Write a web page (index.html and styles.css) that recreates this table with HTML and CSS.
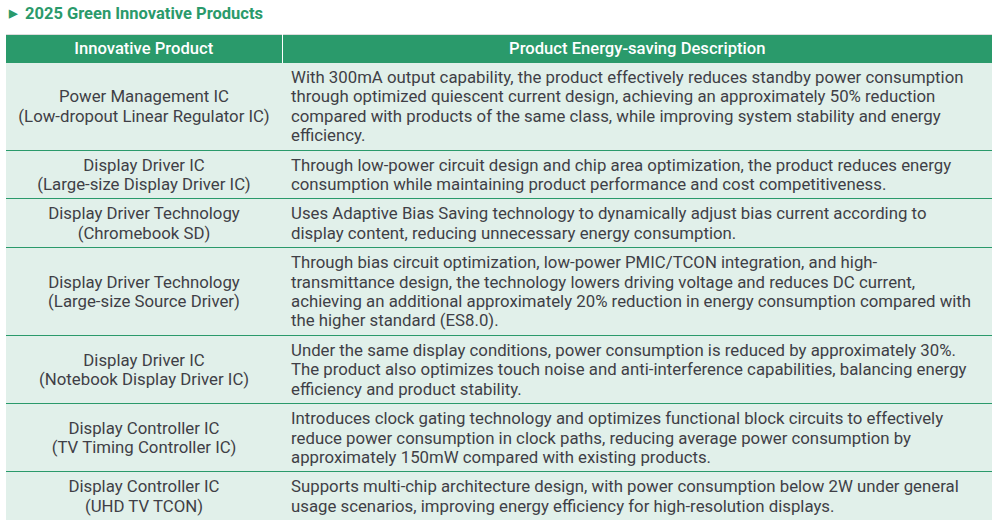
FILE: index.html
```html
<!DOCTYPE html>
<html lang="en">
<head>
<meta charset="utf-8">
<title>2025 Green Innovative Products</title>
<link rel="stylesheet" href="styles.css">
</head>
<body>
<div class="page">
  <h2 class="title"><span class="tri">&#9654;</span>2025 Green Innovative Products</h2>
  <table class="products">
    <thead>
      <tr><th class="c1">Innovative Product</th><th class="c2">Product Energy-saving Description</th></tr>
    </thead>
    <tbody>
      <tr><td class="c1">Power Management IC<br>(Low-dropout Linear Regulator IC)</td><td class="c2">With 300mA output capability, the product effectively reduces standby power consumption through optimized quiescent current design, achieving an approximately 50% reduction compared with products of the same class, while improving system stability and energy efficiency.</td></tr>
      <tr><td class="c1">Display Driver IC<br>(Large-size Display Driver IC)</td><td class="c2">Through low-power circuit design and chip area optimization, the product reduces energy consumption while maintaining product performance and cost competitiveness.</td></tr>
      <tr><td class="c1">Display Driver Technology<br>(Chromebook SD)</td><td class="c2">Uses Adaptive Bias Saving technology to dynamically adjust bias current according to display content, reducing unnecessary energy consumption.</td></tr>
      <tr><td class="c1">Display Driver Technology<br>(Large-size Source Driver)</td><td class="c2">Through bias circuit optimization, low-power PMIC/TCON integration, and high-transmittance design, the technology lowers driving voltage and reduces DC current, achieving an additional approximately 20% reduction in energy consumption compared with the higher standard (ES8.0).</td></tr>
      <tr><td class="c1">Display Driver IC<br>(Notebook Display Driver IC)</td><td class="c2">Under the same display conditions, power consumption is reduced by approximately 30%. The product also optimizes touch noise and anti-interference capabilities, balancing energy efficiency and product stability.</td></tr>
      <tr><td class="c1">Display Controller IC<br>(TV Timing Controller IC)</td><td class="c2">Introduces clock gating technology and optimizes functional block circuits to effectively reduce power consumption in clock paths, reducing average power consumption by approximately 150mW compared with existing products.</td></tr>
      <tr><td class="c1">Display Controller IC<br>(UHD TV TCON)</td><td class="c2">Supports multi-chip architecture design, with power consumption below 2W under general usage scenarios, improving energy efficiency for high-resolution displays.</td></tr>
    </tbody>
  </table>
</div>
</body>
</html>
```
FILE: styles.css
```css
html, body {
  margin: 0;
  padding: 0;
  background: #ffffff;
}
.page {
  padding: 3px 6px 0 6px;
  font-family: Roboto, "Liberation Sans", sans-serif;
}
.title {
  margin: 0 0 0 3px;
  display: flex;
  align-items: center;
  font-size: 16.5px;
  font-weight: 700;
  color: #2a9a6b;
  line-height: 22px;
  padding-bottom: 9px;
}
.tri {
  font-size: 11px;
  margin-right: 8px;
  display: inline-block;
}
.products {
  width: 986px;
  border-collapse: collapse;
  border-top: 1px solid #dcdcdc;
}
.products th {
  background: #2a9a6b;
  color: #ffffff;
  font-weight: 500;
  font-size: 16.6px;
  line-height: 20px;
  height: 28px;
  padding: 0 8px;
  text-align: center;
}
.products th.c1 {
  border-right: 1px solid #ffffff;
}
.products td {
  background: #e1f0ea;
  color: #3f3f46;
  font-size: 16.8px;
  line-height: 19.4px;
  padding: 5px 9px 4px 9px;
  border-bottom: 1px solid #2a9a6b;
  vertical-align: middle;
}
.products tbody tr:last-child td {
  border-bottom: none;
}
.products td.c1 {
  width: 258px;
  text-align: center;
}
.products td.c2 {
  text-align: left;
  padding-right: 13px;
}
```
